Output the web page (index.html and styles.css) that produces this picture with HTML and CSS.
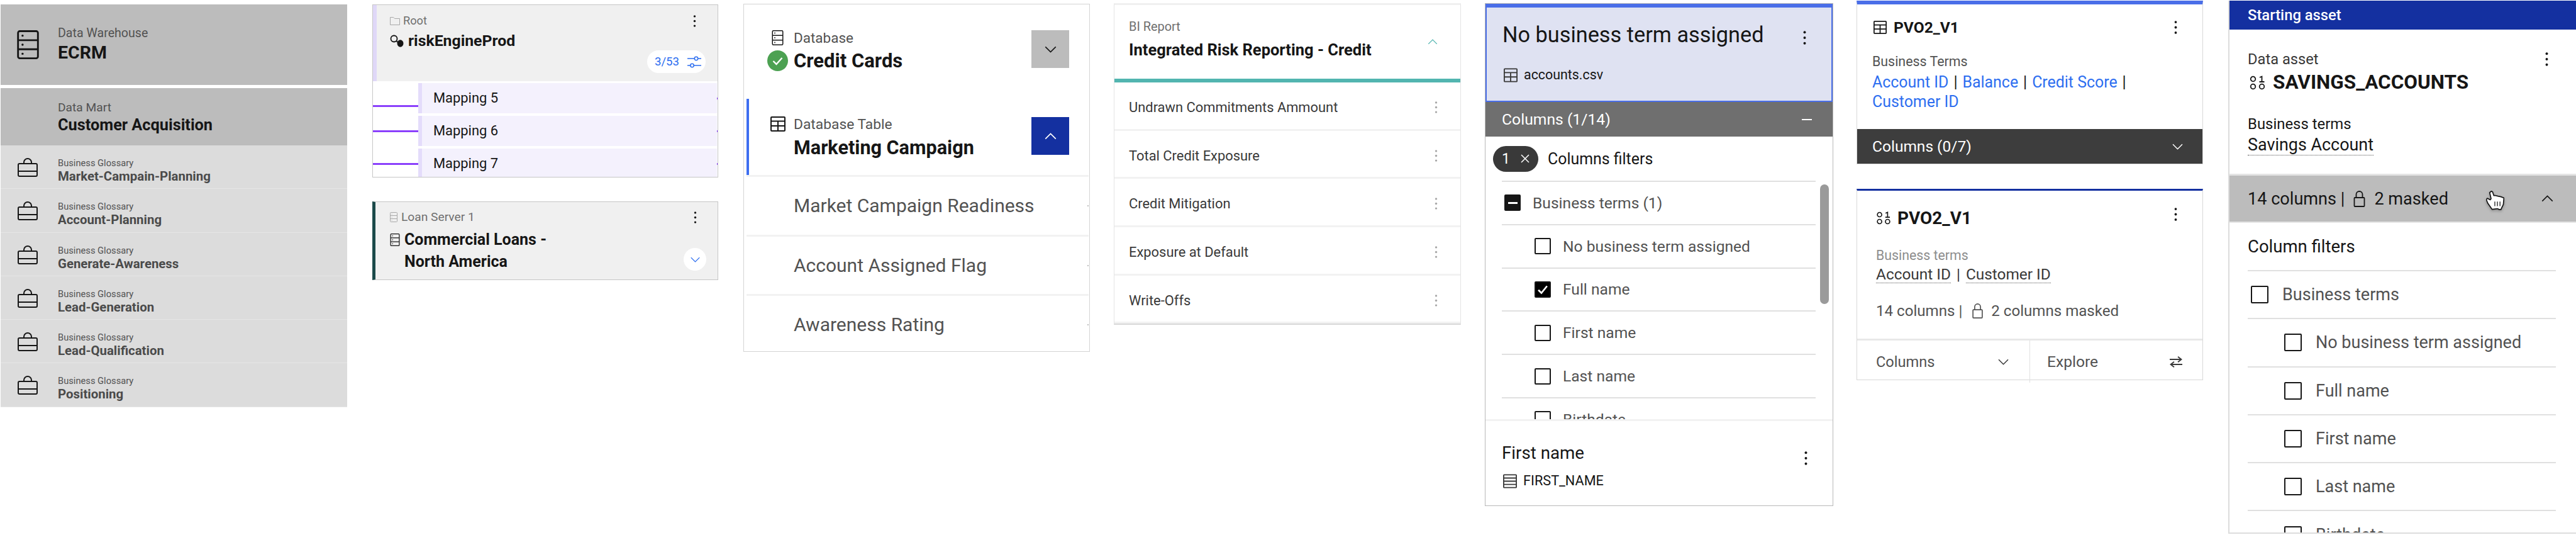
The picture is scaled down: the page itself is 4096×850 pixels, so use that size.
FILE: index.html
```html
<!DOCTYPE html>
<html lang="en">
<head>
  <meta charset="UTF-8">
  <meta name="viewport" content="width=device-width, initial-scale=1.0">
  <title>Asset cards</title>
  <link rel="stylesheet" href="styles.css">
</head>
<body>
  <svg class="defs" aria-hidden="true">
    <symbol id="i-server" viewBox="0 0 24 32"><rect x="1" y="1" width="22" height="30" rx="2" fill="none" stroke="currentColor" stroke-width="2"/><path d="M1 11h22M1 21h22" stroke="currentColor" stroke-width="2"/><circle cx="6" cy="6" r="1.2" fill="currentColor"/><circle cx="6" cy="16" r="1.2" fill="currentColor"/><circle cx="6" cy="26" r="1.2" fill="currentColor"/></symbol>
    <symbol id="i-case" viewBox="0 0 32 30"><rect x="1" y="9" width="30" height="20" rx="2" fill="none" stroke="currentColor" stroke-width="2"/><path d="M1 21h30M10 9V7a6 6 0 0 1 12 0v2" fill="none" stroke="currentColor" stroke-width="2"/></symbol>
    <symbol id="i-table" viewBox="0 0 24 24"><rect x="1" y="1" width="22" height="22" rx="1" fill="none" stroke="currentColor" stroke-width="2"/><path d="M1 7.5h22M1 15h22M12 7.5V23" stroke="currentColor" stroke-width="2"/></symbol>
    <symbol id="i-column" viewBox="0 0 24 24"><rect x="1" y="1" width="22" height="22" rx="1" fill="none" stroke="currentColor" stroke-width="2"/><path d="M1 6.5h22M1 12h22M1 17.5h22" stroke="currentColor" stroke-width="2"/></symbol>
    <symbol id="i-binary" viewBox="0 0 24 23"><circle cx="5" cy="5.5" r="3.8" fill="none" stroke="currentColor" stroke-width="1.8"/><circle cx="5" cy="17.5" r="3.8" fill="none" stroke="currentColor" stroke-width="1.8"/><circle cx="19" cy="17.5" r="3.8" fill="none" stroke="currentColor" stroke-width="1.8"/><path d="M15.5 3L19 1.5V10M15 10h8" fill="none" stroke="currentColor" stroke-width="1.8"/></symbol>
    <symbol id="i-lock" viewBox="0 0 18 26"><rect x="1" y="11" width="16" height="14" rx="1" fill="none" stroke="currentColor" stroke-width="1.8"/><path d="M4 11V6a5 5 0 0 1 10 0v5" fill="none" stroke="currentColor" stroke-width="1.8"/></symbol>
    <symbol id="i-down" viewBox="0 0 20 12"><path d="M1 1.5l9 9 9-9" fill="none" stroke="currentColor" stroke-width="1.8"/></symbol>
    <symbol id="i-up" viewBox="0 0 20 12"><path d="M1 10.5l9-9 9 9" fill="none" stroke="currentColor" stroke-width="1.8"/></symbol>
    <symbol id="i-kebab" viewBox="0 0 4 20"><circle cx="2" cy="2" r="1.8" fill="currentColor"/><circle cx="2" cy="10" r="1.8" fill="currentColor"/><circle cx="2" cy="18" r="1.8" fill="currentColor"/></symbol>
  </svg>

  <div class="board">

    <!-- warehouse tree -->
    <section class="tree">
      <div class="tree-head tree-head-tall">
        <svg class="icon-server-lg"><use href="#i-server"/></svg>
        <div>
          <div class="tree-label">Data Warehouse</div>
          <div class="tree-title">ECRM</div>
        </div>
      </div>
      <div class="tree-head tree-head-short">
        <div>
          <div class="tree-label tree-label-mart">Data Mart</div>
          <div class="tree-title tree-title-mart">Customer Acquisition</div>
        </div>
      </div>
      <div class="tree-row"><svg class="icon-case"><use href="#i-case"/></svg><div><div class="tree-kind">Business Glossary</div><div class="tree-name">Market-Campain-Planning</div></div></div>
      <div class="tree-row"><svg class="icon-case"><use href="#i-case"/></svg><div><div class="tree-kind">Business Glossary</div><div class="tree-name">Account-Planning</div></div></div>
      <div class="tree-row"><svg class="icon-case"><use href="#i-case"/></svg><div><div class="tree-kind">Business Glossary</div><div class="tree-name">Generate-Awareness</div></div></div>
      <div class="tree-row"><svg class="icon-case"><use href="#i-case"/></svg><div><div class="tree-kind">Business Glossary</div><div class="tree-name">Lead-Generation</div></div></div>
      <div class="tree-row"><svg class="icon-case"><use href="#i-case"/></svg><div><div class="tree-kind">Business Glossary</div><div class="tree-name">Lead-Qualification</div></div></div>
      <div class="tree-row"><svg class="icon-case"><use href="#i-case"/></svg><div><div class="tree-kind">Business Glossary</div><div class="tree-name">Positioning</div></div></div>
    </section>

    <!-- lineage nodes -->
    <div class="nodes">
      <section class="node node-mapping">
        <div class="node-head">
          <div class="node-top">
            <svg class="icon-folder" viewBox="0 0 16 13"><path d="M.5 12.5V.5h5l2 2h8v10z" fill="none" stroke="#a8a8a8"/></svg>
            <span class="node-label">Root</span>
            <svg class="icon-kebab icon-kebab-root"><use href="#i-kebab"/></svg>
          </div>
          <div class="node-title">
            <svg class="icon-key" viewBox="0 0 22 20"><circle cx="6.5" cy="6.5" r="5" fill="none" stroke="#161616" stroke-width="1.8"/><path d="M10 10l5 4" stroke="#161616" stroke-width="1.8"/><ellipse cx="16.5" cy="14" rx="5" ry="5.8" fill="#161616"/></svg>
            <span>riskEngineProd</span>
          </div>
          <div class="count-pill">
            <span>3/53</span>
            <svg class="icon-sliders" viewBox="0 0 22 19"><path d="M0 4h12M16.5 4H22M0 15h5M10 15h12" stroke="#2d6ef0" stroke-width="1.5"/><circle cx="14" cy="4" r="2.7" fill="none" stroke="#2d6ef0" stroke-width="1.5"/><circle cx="7.5" cy="15" r="2.7" fill="none" stroke="#2d6ef0" stroke-width="1.5"/></svg>
          </div>
        </div>
        <div class="map-list">
          <div class="map-row map-row-first">Mapping 5</div>
          <div class="map-row">Mapping 6</div>
          <div class="map-row">Mapping 7</div>
        </div>
      </section>

      <section class="node node-loan">
        <div class="node-top node-top-loan">
          <svg class="icon-server-sm icon-muted"><use href="#i-server"/></svg>
          <span class="node-label">Loan Server 1</span>
          <svg class="icon-kebab icon-kebab-loan"><use href="#i-kebab"/></svg>
        </div>
        <div class="node-title node-title-loan">
          <svg class="icon-server-md"><use href="#i-server"/></svg>
          <span>Commercial Loans -<br>North America</span>
        </div>
        <div class="round-toggle"><svg class="icon-chevron-sm"><use href="#i-down"/></svg></div>
      </section>
    </div>

    <!-- database table -->
    <section class="db">
      <div class="db-head">
        <div class="db-icons">
          <svg class="icon-server-db"><use href="#i-server"/></svg>
          <svg class="icon-check" viewBox="0 0 33 33"><circle cx="16.5" cy="16.5" r="16.5" fill="#4ca152"/><path d="M9.5 17l5 5 9-10" fill="none" stroke="#fff" stroke-width="2.4"/></svg>
        </div>
        <div class="db-text">
          <div class="db-label">Database</div>
          <div class="db-title db-title-card">Credit Cards</div>
        </div>
        <div class="db-btn db-btn-gray"><svg class="icon-chevron"><use href="#i-down"/></svg></div>
      </div>
      <div class="db-head db-head-active">
        <div class="db-icons"><svg class="icon-table-db"><use href="#i-table"/></svg></div>
        <div class="db-text">
          <div class="db-label db-label-table">Database Table</div>
          <div class="db-title">Marketing Campaign</div>
        </div>
        <div class="db-btn db-btn-blue"><svg class="icon-chevron"><use href="#i-up"/></svg></div>
      </div>
      <div class="db-row">Market Campaign Readiness</div>
      <div class="db-row">Account Assigned Flag</div>
      <div class="db-row">Awareness Rating</div>
    </section>

    <!-- bi report -->
    <section class="report">
      <div class="report-head">
        <div>
          <div class="report-label">BI Report</div>
          <div class="report-title">Integrated Risk Reporting - Credit</div>
        </div>
        <svg class="icon-chevron-teal"><use href="#i-up"/></svg>
      </div>
      <div class="report-row"><span>Undrawn Commitments Ammount</span><svg class="icon-kebab"><use href="#i-kebab"/></svg></div>
      <div class="report-row"><span>Total Credit Exposure</span><svg class="icon-kebab"><use href="#i-kebab"/></svg></div>
      <div class="report-row"><span>Credit Mitigation</span><svg class="icon-kebab"><use href="#i-kebab"/></svg></div>
      <div class="report-row"><span>Exposure at Default</span><svg class="icon-kebab"><use href="#i-kebab"/></svg></div>
      <div class="report-row"><span>Write-Offs</span><svg class="icon-kebab"><use href="#i-kebab"/></svg></div>
    </section>

    <!-- selected term with filters -->
    <section class="term">
      <div class="term-head">
        <div class="term-title-row">
          <div class="term-title">No business term assigned</div>
          <svg class="icon-kebab-lg icon-kebab-head"><use href="#i-kebab"/></svg>
        </div>
        <div class="term-file"><svg class="icon-table-sm"><use href="#i-table"/></svg><span>accounts.csv</span></div>
      </div>
      <div class="term-bar"><span>Columns (1/14)</span><span class="minus"></span></div>
      <div class="filter-row">
        <div class="filter-pill"><span>1</span><svg class="icon-x" viewBox="0 0 14 14"><path d="M1 1l12 12M13 1L1 13" stroke="#fff" stroke-width="1.5"/></svg></div>
        <span class="filter-text">Columns filters</span>
      </div>
      <div class="check-list">
        <div class="scroll-thumb"></div>
        <div class="check-row"><span class="box box-dash"></span>Business terms (1)</div>
        <div class="check-row check-child"><span class="box"></span>No business term assigned</div>
        <div class="check-row check-child"><span class="box box-on"><svg viewBox="0 0 16 16"><path d="M3 8.5L6.5 12 13 4" fill="none" stroke="#fff" stroke-width="2"/></svg></span>Full name</div>
        <div class="check-row check-child"><span class="box"></span>First name</div>
        <div class="check-row check-child"><span class="box"></span>Last name</div>
        <div class="check-row check-child"><span class="box"></span>Birthdate</div>
      </div>
      <div class="term-foot">
        <div class="term-title-row">
          <div class="foot-title">First name</div>
          <svg class="icon-kebab-lg icon-kebab-foot"><use href="#i-kebab"/></svg>
        </div>
        <div class="term-file term-file-foot"><svg class="icon-table-sm"><use href="#i-column"/></svg><span>FIRST_NAME</span></div>
      </div>
    </section>

    <!-- two small asset cards -->
    <div class="pvo-col">
      <section class="pvo pvo-a">
        <div class="pvo-head">
          <svg class="icon-pvo-table"><use href="#i-table"/></svg>
          <span class="pvo-name">PVO2_V1</span>
          <svg class="icon-kebab-md"><use href="#i-kebab"/></svg>
        </div>
        <div class="pvo-label">Business Terms</div>
        <div class="pvo-links">
          <a>Account ID</a><span class="sep">|</span><a>Balance</a><span class="sep">|</span><a>Credit Score</a><span class="sep">|</span><br><a>Customer ID</a>
        </div>
        <div class="pvo-bar"><span>Columns (0/7)</span><svg class="icon-chevron icon-chevron-bar"><use href="#i-down"/></svg></div>
      </section>

      <section class="pvo pvo-b">
        <div class="pvo-head pvo-head-b">
          <svg class="icon-pvo-binary"><use href="#i-binary"/></svg>
          <span class="pvo-name pvo-name-b">PVO2_V1</span>
          <svg class="icon-kebab-md icon-kebab-b"><use href="#i-kebab"/></svg>
        </div>
        <div class="pvo-label pvo-label-b">Business terms</div>
        <div class="pvo-terms"><span class="dotted">Account ID</span><span class="sep">|</span><span class="dotted">Customer ID</span></div>
        <div class="pvo-count">
          <span>14 columns |</span>
          <svg class="icon-lock"><use href="#i-lock"/></svg>
          <span>2 columns masked</span>
        </div>
        <div class="pvo-foot">
          <div class="pvo-foot-cell pvo-foot-left"><span>Columns</span><svg class="icon-chevron-foot"><use href="#i-down"/></svg></div>
          <div class="pvo-foot-cell pvo-foot-right">
            <span>Explore</span>
            <svg class="icon-swap" viewBox="0 0 20 18"><path d="M0 5h18M13 .8L18.5 5 13 9.2M20 13H2M7 8.8L1.5 13 7 17.2" fill="none" stroke="#393939" stroke-width="1.8"/></svg>
          </div>
        </div>
      </section>
    </div>

    <!-- starting asset -->
    <section class="start">
      <div class="start-bar">Starting asset</div>
      <div class="start-body">
        <div class="start-top">
          <span class="start-kind">Data asset</span>
          <svg class="icon-kebab-lg"><use href="#i-kebab"/></svg>
        </div>
        <div class="start-name"><svg class="icon-start-binary"><use href="#i-binary"/></svg><span>SAVINGS_ACCOUNTS</span></div>
        <div class="start-terms-label">Business terms</div>
        <div class="start-term"><span class="dotted">Savings Account</span></div>
      </div>
      <div class="start-columns">
        <span>14 columns |</span>
        <svg class="icon-lock icon-lock-lg"><use href="#i-lock"/></svg>
        <span>2 masked</span>
        <svg class="icon-chevron icon-chevron-start"><use href="#i-up"/></svg>
        <svg class="hand" viewBox="0 0 51 54"><path d="M15 1L10 5l4 17-2.300 3-8.400-4-2.600 4L5 35l11.700 16.700L31.700 50l5 2.300h5l1.600-4 5-10L50 20l-8.300-3.300-8.400-1.700-6.600-1.700h-5L18.300 3.300z" fill="#fff" stroke="#161616" stroke-width="3" stroke-linejoin="round"/><path d="M24.500 30v13M31.700 30v13M39 30v13" stroke="#393939" stroke-width="2.600"/></svg>
      </div>
      <div class="start-filters">
        <div class="start-filters-title">Column filters</div>
        <div class="start-row"><span class="box box-lg"></span>Business terms</div>
        <div class="start-row start-child"><span class="box box-lg"></span>No business term assigned</div>
        <div class="start-row start-child"><span class="box box-lg"></span>Full name</div>
        <div class="start-row start-child"><span class="box box-lg"></span>First name</div>
        <div class="start-row start-child"><span class="box box-lg"></span>Last name</div>
        <div class="start-row start-child"><span class="box box-lg"></span>Birthdate</div>
      </div>
    </section>

  </div>
</body>
</html>
```
FILE: styles.css
```css
body {
  margin: 0;
  width: 4096px;
  height: 850px;
  overflow: hidden;
  background-color: #fff;
  color: #161616;
  font-family: Roboto, "Noto Sans", sans-serif;
}
svg {
  display: block;
  flex: none;
}
.defs {
  display: none;
}
.board {
  display: flex;
  align-items: flex-start;
}

/* warehouse tree */
.tree {
  width: 551px;
  margin: 7px 0 0 1px;
}
.tree-head {
  display: flex;
  align-items: center;
  background-color: #bcbcbc;
}
.tree-head-tall {
  height: 128px;
  padding-left: 26px;
  gap: 30px;
  margin-bottom: 5px;
}
.tree-head-short {
  height: 91px;
  padding-left: 91px;
}
.icon-server-lg {
  width: 35px;
  height: 46px;
}
.tree-label {
  font-size: 19.6px;
  line-height: 26px;
  color: #525252;
}
.tree-label-mart {
  font-size: 19.2px;
}
.tree-title {
  font-size: 28.5px;
  line-height: 36px;
  font-weight: 700;
}
.tree-title-mart {
  font-size: 25.3px;
  line-height: 30px;
}
.tree-row {
  display: flex;
  gap: 32px;
  height: 69.3px;
  box-sizing: border-box;
  padding: 19px 0 0 27px;
  background-color: #dcdcdc;
  border-bottom: 1px solid #e6e6e6;
}
.icon-case {
  width: 32px;
  height: 30px;
  margin-top: 1px;
}
.tree-kind {
  font-size: 14.7px;
  line-height: 18px;
  color: #525252;
}
.tree-name {
  font-size: 20.4px;
  line-height: 24px;
  font-weight: 700;
  color: #4a4a4a;
}

/* lineage nodes */
.nodes {
  width: 550px;
  margin: 7px 0 0 40px;
}
.node {
  position: relative;
  box-sizing: border-box;
  overflow: hidden;
  border: 1px solid #c6c6c6;
}
.node-mapping {
  height: 275px;
  margin-bottom: 38px;
}
.node-head {
  height: 121px;
  box-sizing: border-box;
  padding: 15px 19px 0 21px;
  background-color: #f0f0f0;
  border-left: 6px solid #e0d8f8;
}
.node-top {
  display: flex;
  align-items: center;
  gap: 5px;
  height: 20px;
}
.icon-folder {
  width: 16px;
  height: 13px;
}
.node-label {
  font-size: 18.2px;
  line-height: 20px;
  color: #6f6f6f;
}
.icon-kebab-root {
  margin-left: auto;
  margin-right: 15px;
}
.node-title {
  display: flex;
  align-items: center;
  gap: 7px;
  margin-top: 8px;
  font-size: 24.8px;
  line-height: 28px;
  font-weight: 700;
}
.icon-key {
  width: 22px;
  height: 20px;
}
.count-pill {
  display: flex;
  align-items: center;
  gap: 13px;
  width: 93px;
  height: 36px;
  box-sizing: border-box;
  margin: 1px 0 0 auto;
  padding-left: 12px;
  border-radius: 18px;
  background-color: #fff;
  color: #2d6ef0;
  font-size: 18.6px;
}
.icon-sliders {
  width: 22px;
  height: 19px;
}
.map-list {
  display: flex;
  flex-direction: column;
  gap: 4px;
  margin: 3px 1px 0 72px;
}
.map-row {
  position: relative;
  height: 48px;
  flex: none;
  padding-left: 18px;
  line-height: 48px;
  font-size: 21.9px;
  background-color: #f4f1fd;
  border-left: 6.5px solid #e4dcfb;
}
.map-row::before {
  content: "";
  position: absolute;
  left: -78.5px;
  top: 22.5px;
  width: 72px;
  height: 3px;
  background-color: #8a3ffc;
}
.map-row-first::before {
  top: 35px;
}
.map-row::after {
  content: "";
  position: absolute;
  left: 100%;
  top: 22.5px;
  width: 2px;
  height: 3px;
  background-color: #8a3ffc;
}
.node-loan {
  height: 125px;
  padding: 14px 0 0 23px;
  background-color: #f0f0f0;
  border-left: 5px solid #1b4a4a;
}
.node-top-loan {
  gap: 6px;
}
.node-top-loan .node-label {
  font-size: 19.2px;
}
.icon-kebab-loan {
  margin-left: auto;
  margin-right: 33px;
}
.icon-server-sm {
  width: 12px;
  height: 16px;
}
.icon-muted {
  color: #a8a8a8;
}
.node-title-loan {
  align-items: flex-start;
  margin-top: 9px;
  font-size: 25px;
  line-height: 34.5px;
}
.icon-server-md {
  width: 16px;
  height: 20px;
  margin-top: 7px;
}
.round-toggle {
  position: absolute;
  right: 18px;
  bottom: 14px;
  display: flex;
  align-items: center;
  justify-content: center;
  width: 36px;
  height: 36px;
  border-radius: 50%;
  background-color: #fff;
  color: #2d6ef0;
}
.icon-chevron-sm {
  width: 15px;
  height: 9px;
}
.icon-kebab,
.icon-kebab-md,
.icon-kebab-lg {
  width: 5px;
  height: 19px;
}
.icon-kebab-md {
  height: 21px;
}
.icon-kebab-lg {
  height: 22px;
}

/* database table */
.db {
  width: 551px;
  height: 553px;
  box-sizing: border-box;
  margin: 6px 0 0 40px;
  overflow: hidden;
  border: 1px solid #d4d4d4;
}
.db-head {
  display: flex;
  height: 150px;
  box-sizing: border-box;
  padding: 41px 32px 0 37px;
}
.db-head-active {
  height: 121px;
  margin-left: 4px;
  padding: 29px 32px 0 29px;
  border-left: 4px solid #3d6ef0;
}
.db-icons {
  width: 33px;
  margin-right: 9px;
}
.icon-server-db {
  width: 19px;
  height: 24px;
  margin: 0 auto 8px;
}
.icon-check {
  width: 33px;
  height: 33px;
}
.icon-table-db {
  width: 24px;
  height: 24px;
  margin: -1px auto 0;
}
.db-text {
  flex: 1;
}
.db-label {
  font-size: 22.5px;
  line-height: 24px;
  color: #525252;
}
.db-label-table {
  font-size: 22.8px;
}
.db-title {
  margin-top: 5px;
  font-size: 30.6px;
  line-height: 40px;
  font-weight: 700;
}
.db-title-card {
  font-size: 31px;
}
.db-btn {
  display: flex;
  align-items: center;
  justify-content: center;
  width: 60px;
  height: 60px;
}
.db-btn-gray {
  background-color: #bcbcbc;
}
.db-btn-blue {
  background-color: #1430a0;
  color: #fff;
}
.icon-chevron {
  width: 19px;
  height: 11px;
}
.db-row {
  position: relative;
  height: 94.5px;
  box-sizing: border-box;
  margin-left: 4px;
  margin-right: 1px;
  padding-left: 75px;
  border-top: 3px solid #f2f2f2;
  font-size: 30px;
  line-height: 91.5px;
  color: #525252;
}
.db-row::after {
  content: "";
  position: absolute;
  right: 0;
  top: 45px;
  width: 2px;
  height: 2px;
  background-color: #c0c0c0;
}

/* bi report */
.report {
  width: 552px;
  box-sizing: border-box;
  margin: 5px 0 0 38px;
  border: 1px solid #e4e4e4;
  border-top: 3px solid #f0f0f0;
  border-bottom: 2px solid #d8d8d8;
}
.report-head {
  display: flex;
  justify-content: space-between;
  height: 123px;
  box-sizing: border-box;
  padding: 24px 36px 0 23px;
  border-bottom: 6px solid #52b5b0;
}
.report-label {
  font-size: 19.9px;
  line-height: 22px;
  color: #6f6f6f;
}
.report-title {
  margin-top: 10px;
  font-size: 25.5px;
  line-height: 30px;
  font-weight: 700;
}
.icon-chevron-teal {
  width: 16px;
  height: 9px;
  margin-top: 30px;
  color: #52b5b0;
}
.report-row {
  display: flex;
  align-items: center;
  justify-content: space-between;
  height: 76.7px;
  box-sizing: border-box;
  padding: 5px 36px 0 23px;
  border-bottom: 3px solid #f2f2f2;
  font-size: 21.9px;
  color: #393939;
}
.report-row .icon-kebab {
  color: #a8a8a8;
}

/* selected term */
.term {
  width: 554px;
  height: 799px;
  box-sizing: border-box;
  margin: 5px 0 0 38px;
  overflow: hidden;
  border: 1px solid #b8b8b8;
}
.term-head {
  height: 156px;
  box-sizing: border-box;
  padding: 21px 40px 0 25px;
  background-color: #dfe2f2;
  border: 2px solid #4a6ee8;
  border-top-width: 6px;
}
.term-title-row {
  display: flex;
  align-items: center;
  justify-content: space-between;
}
.term-title {
  font-size: 34.3px;
  line-height: 44px;
}
.icon-kebab-head {
  margin-top: 9px;
}
.term-file {
  display: flex;
  align-items: center;
  gap: 10px;
  margin-top: 30px;
  font-size: 21.4px;
  line-height: 24px;
}
.term-file svg {
  margin-left: 2px;
}
.icon-table-sm {
  width: 22px;
  height: 23px;
  color: #393939;
}
.term-bar {
  display: flex;
  align-items: center;
  justify-content: space-between;
  height: 55px;
  padding: 0 33px 0 26px;
  background-color: #6f6f6f;
  color: #fff;
  font-size: 24.7px;
}
.minus {
  width: 16px;
  height: 2px;
  background-color: #fff;
}
.filter-row {
  display: flex;
  align-items: center;
  gap: 15px;
  height: 70px;
  padding-left: 12px;
  font-size: 24.9px;
}
.filter-pill {
  display: flex;
  align-items: center;
  justify-content: space-between;
  width: 72px;
  height: 41px;
  box-sizing: border-box;
  padding: 0 14px;
  border-radius: 21px;
  background-color: #393939;
  color: #fff;
  font-size: 23px;
}
.icon-x {
  width: 14px;
  height: 14px;
}
.check-list {
  position: relative;
  height: 379px;
  overflow: hidden;
}
.check-list::before {
  content: "";
  display: block;
  height: 2px;
  margin: 0 27px 0 26px;
  background-color: #e0e0e0;
}
.scroll-thumb {
  position: absolute;
  right: 6px;
  top: 6px;
  width: 14px;
  height: 190px;
  border-radius: 7px;
  background-color: #9a9a9a;
}
.check-row {
  display: flex;
  align-items: center;
  gap: 19px;
  height: 68.8px;
  box-sizing: border-box;
  margin: 0 27px 0 26px;
  padding-left: 4px;
  border-bottom: 2px solid #e0e0e0;
  font-size: 24.6px;
  color: #525252;
}
.check-child {
  padding-left: 52px;
}
.box {
  width: 26px;
  height: 26px;
  flex: none;
  box-sizing: border-box;
  border: 2px solid #161616;
  border-radius: 2px;
  background-color: #fff;
}
.box-on {
  background-color: #000;
}
.box-on svg {
  width: 22px;
  height: 22px;
}
.box-dash {
  display: flex;
  align-items: center;
  justify-content: center;
  background-color: #161616;
}
.box-dash::after {
  content: "";
  width: 15px;
  height: 3px;
  background-color: #fff;
}
.term-foot {
  box-sizing: border-box;
  height: 136px;
  padding: 32px 40px 0 26px;
  border-top: 3px solid #f2f2f2;
}
.foot-title {
  font-size: 27.7px;
  line-height: 32px;
}
.icon-kebab-foot {
  margin-top: 16px;
}
.term-file-foot {
  margin-top: 13px;
  font-size: 21.7px;
}

/* small asset cards */
.pvo-col {
  width: 551px;
  margin: 1px 0 0 37px;
}
.pvo {
  box-sizing: border-box;
  border: 1px solid #d8d8d8;
}
.pvo-a {
  display: flex;
  flex-direction: column;
  height: 260px;
  margin-bottom: 39px;
  padding-top: 21px;
  border-top: 6px solid #4a6ee8;
}
.pvo-head {
  display: flex;
  align-items: center;
  padding: 0 40px 0 26px;
  height: 30px;
}
.icon-pvo-table {
  width: 21px;
  height: 21px;
  margin-right: 11px;
}
.pvo-name {
  flex: 1;
  font-size: 24.6px;
  font-weight: 700;
}
.pvo-label {
  margin-top: 28px;
  padding-left: 24px;
  font-size: 21.4px;
  line-height: 24px;
  color: #525252;
}
.pvo-links {
  margin-top: 5px;
  padding-left: 24px;
  font-size: 24.9px;
  line-height: 31.4px;
}
.pvo-links a {
  color: #2d6ef0;
}
.sep {
  margin: 0 9px;
}
.pvo-links .sep {
  margin: 0 8px;
}
.pvo-bar {
  display: flex;
  align-items: center;
  justify-content: space-between;
  margin-top: auto;
  height: 55px;
  padding: 0 31px 0 24px;
  background-color: #3d3d3d;
  color: #fff;
  font-size: 24.5px;
}
.icon-chevron-bar {
  width: 17px;
  height: 10px;
}
.pvo-b {
  height: 304px;
  padding-top: 28px;
  border-top: 3px solid #1430a0;
}
.pvo-head-b {
  height: 32px;
  align-items: flex-start;
  padding-left: 31px;
}
.icon-pvo-binary {
  width: 22px;
  height: 21px;
  margin: 5px 11px 0 0;
}
.pvo-name-b {
  font-size: 27.9px;
  line-height: 32px;
}
.icon-kebab-b {
  margin-top: -1px;
}
.pvo-label-b {
  margin-top: 31px;
  padding-left: 30px;
  font-size: 21.3px;
  color: #8d8d8d;
}
.pvo-terms {
  display: flex;
  margin-top: 4px;
  padding-left: 30px;
  font-size: 24.4px;
  line-height: 27px;
  color: #393939;
}
.dotted {
  border-bottom: 1px dotted #525252;
}
.pvo-count {
  display: flex;
  align-items: center;
  margin-top: 29px;
  padding-left: 30px;
  font-size: 24.1px;
  line-height: 30px;
  color: #525252;
}
.icon-lock {
  width: 17px;
  height: 24px;
  margin: 0 13px 0 16px;
}
.pvo-foot {
  display: flex;
  height: 67px;
  margin-top: 29px;
  border-top: 3px solid #e8e8e8;
  color: #525252;
  font-size: 23.6px;
}
.pvo-foot-cell {
  display: flex;
  align-items: center;
  justify-content: space-between;
}
.pvo-foot-left {
  width: 275px;
  box-sizing: border-box;
  padding: 0 33px 0 30px;
  border-right: 1px solid #e0e0e0;
}
.pvo-foot-right {
  flex: 1;
  padding: 0 32px 0 27px;
  font-size: 24.6px;
}
.icon-chevron-foot {
  width: 17px;
  height: 10px;
  color: #393939;
}
.icon-swap {
  width: 20px;
  height: 18px;
}

/* starting asset */
.start {
  width: 553px;
  height: 847px;
  box-sizing: border-box;
  margin: 1px 0 0 40px;
  overflow: hidden;
  border-left: 2px solid #dcdcdc;
  border-bottom: 2px solid #dcdcdc;
}
.start-bar {
  height: 46px;
  padding-left: 29px;
  background-color: #1430a0;
  color: #fff;
  font-size: 23.8px;
  font-weight: 500;
  line-height: 46px;
}
.start-body {
  height: 229px;
  box-sizing: border-box;
  padding: 34px 0 0 29px;
}
.start-top {
  display: flex;
  align-items: center;
  justify-content: space-between;
  padding-right: 44px;
}
.start-kind {
  font-size: 23.7px;
  line-height: 26px;
  color: #393939;
}
.start-name {
  display: flex;
  align-items: center;
  gap: 12px;
  margin-top: 4px;
  font-size: 31.5px;
  line-height: 40px;
  font-weight: 700;
}
.icon-start-binary {
  width: 25px;
  height: 23px;
  margin-left: 3px;
}
.start-terms-label {
  margin-top: 33px;
  font-size: 23.9px;
  line-height: 26px;
}
.start-term {
  margin-top: 4px;
  font-size: 26.9px;
  line-height: 32px;
}
.start-columns {
  position: relative;
  display: flex;
  align-items: center;
  height: 73px;
  padding-left: 29px;
  background-color: #bcbcbc;
  border-top: 3px solid #e4e4e4;
  border-bottom: 2px solid #e4e4e4;
  font-size: 27.1px;
}
.icon-lock-lg {
  width: 19px;
  height: 26px;
  margin: 0 14px;
}
.icon-chevron-start {
  margin-left: auto;
  margin-right: 36px;
}
.hand {
  position: absolute;
  left: 408px;
  top: 24px;
  width: 29px;
  height: 31px;
  filter: drop-shadow(0 2px 2px rgba(0, 0, 0, 0.25));
}
.start-filters {
  padding: 22px 32px 0 29px;
}
.start-filters-title {
  height: 53px;
  border-bottom: 2px solid #e0e0e0;
  font-size: 27.5px;
  line-height: 32px;
}
.start-row {
  display: flex;
  align-items: center;
  gap: 22px;
  height: 76.3px;
  box-sizing: border-box;
  padding-left: 5px;
  border-bottom: 2px solid #e0e0e0;
  font-size: 27px;
  color: #525252;
}
.start-child {
  padding-left: 58px;
}
.box-lg {
  width: 28px;
  height: 28px;
}
```
